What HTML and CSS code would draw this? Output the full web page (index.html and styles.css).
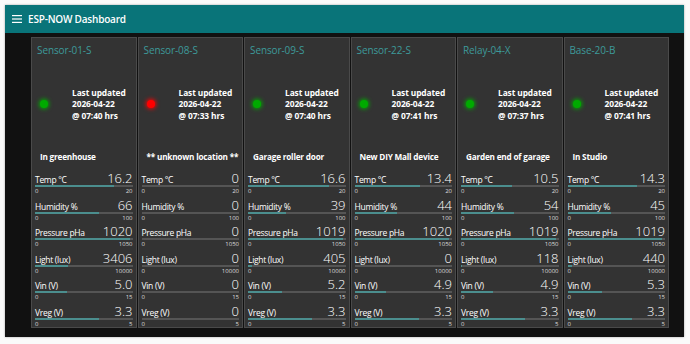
FILE: index.html
```html
<!DOCTYPE html>
<html lang="en">
<head>
    <meta charset="UTF-8">
    <title>ESP-NOW Dashboard</title>
    <link rel="stylesheet" href="styles.css">
</head>
<body>
    <div class="frame">
        <div class="toolbar">
            <svg class="menu-icon" width="10" height="8" viewBox="0 0 10 8">
                <rect x="0" y="0" width="10" height="1.2" fill="#fff"/>
                <rect x="0" y="3.4" width="10" height="1.2" fill="#fff"/>
                <rect x="0" y="6.8" width="10" height="1.2" fill="#fff"/>
            </svg>
            <span class="title">ESP-NOW Dashboard</span>
        </div>

        <div class="content">
            <div class="cards" id="cards"></div>
        </div>
    </div>

    <script>
        const devices = [
            { name: 'Sensor-01-S', ok: true, time: '07:40', loc: 'In greenhouse', vals: ['16.2', '66', '1020', '3406', '5.0', '3.3'] },
            { name: 'Sensor-08-S', ok: false, time: '07:33', loc: '** unknown location **', vals: ['0', '0', '0', '0', '0', '0'] },
            { name: 'Sensor-09-S', ok: true, time: '07:40', loc: 'Garage roller door', vals: ['16.6', '39', '1019', '405', '5.2', '3.3'] },
            { name: 'Sensor-22-S', ok: true, time: '07:41', loc: 'New DIY Mall device', vals: ['13.4', '44', '1020', '0', '4.9', '3.3'] },
            { name: 'Relay-04-X', ok: true, time: '07:37', loc: 'Garden end of garage', vals: ['10.5', '54', '1019', '118', '4.9', '3.3'] },
            { name: 'Base-20-B', ok: true, time: '07:41', loc: 'In Studio', vals: ['14.3', '45', '1019', '440', '5.3', '3.3'] }
        ];

        const gauges = [
            { label: 'Temp °C', max: 20 },
            { label: 'Humidity %', max: 100 },
            { label: 'Pressure pHa', max: 1050 },
            { label: 'Light (lux)', max: 10000 },
            { label: 'Vin (V)', max: 15 },
            { label: 'Vreg (V)', max: 5 }
        ];

        const cards = document.getElementById('cards');

        devices.forEach(dev => {
            let html = '<div class="card-title">' + dev.name + '</div>';
            html += '<div class="status">';
            html += '<span class="dot ' + (dev.ok ? 'ok' : 'bad') + '"></span>';
            html += '<div class="updated"><div>Last updated</div><div>2026-04-22</div><div>@ ' + dev.time + ' hrs</div></div>';
            html += '</div>';
            html += '<div class="location">' + dev.loc + '</div>';

            gauges.forEach((g, i) => {
                const v = dev.vals[i];
                const pct = Math.min(100, parseFloat(v) / g.max * 100);
                html += '<div class="gauge">';
                html += '<div class="gauge-head"><span class="gauge-label">' + g.label + '</span><span class="gauge-value">' + v + '</span></div>';
                html += '<div class="track"><div class="fill" style="width:' + pct + '%"></div></div>';
                html += '<div class="range"><span>0</span><span>' + g.max + '</span></div>';
                html += '</div>';
            });

            const card = document.createElement('div');
            card.className = 'card';
            card.innerHTML = html;
            cards.appendChild(card);
        });
    </script>
</body>
</html>
```

FILE: styles.css
```css
* {
    margin: 0;
    padding: 0;
    box-sizing: border-box;
}

body {
    font-family: "Open Sans", "Noto Sans", sans-serif;
    background-color: #fafafa;
    padding: 5px;
}

.frame {
    width: 679px;
    height: 332px;
    background: #111;
    box-shadow: 0 0 2px rgba(0, 0, 0, 0.35);
    display: flex;
    flex-direction: column;
}

.toolbar {
    height: 28px;
    background-color: #097479;
    display: flex;
    align-items: center;
    padding-left: 7px;
    color: #fff;
}

.menu-icon {
    margin-right: 6px;
}

.title {
    font-size: 10px;
    font-weight: 600;
    letter-spacing: -0.2px;
}

.content {
    flex: 1;
    padding: 4px 15px 0 26px;
}

.cards {
    display: grid;
    grid-template-columns: repeat(6, 1fr);
    gap: 1px;
}

.card {
    height: 291px;
    background-color: #333;
    border: 1px solid #4a4a4a;
    color: #fff;
    padding: 0 3px;
}

.card-title {
    height: 24px;
    padding: 5px 0 0 2px;
    font-size: 10px;
    color: #3d9a9a;
    letter-spacing: -0.1px;
}

.status {
    height: 84px;
    display: flex;
    align-items: center;
    padding-left: 5px;
}

.dot {
    width: 8px;
    height: 8px;
    border-radius: 50%;
    margin-right: 24px;
    flex-shrink: 0;
}

.dot.ok {
    background-color: #0a0;
    box-shadow: 0 0 4px 1px #0a0;
}

.dot.bad {
    background-color: #f00;
    box-shadow: 0 0 4px 1px #f00;
}

.updated {
    font-size: 8.4px;
    font-weight: 700;
    line-height: 11.5px;
    letter-spacing: -0.1px;
}

.location {
    height: 22px;
    padding-left: 5px;
    font-size: 8.2px;
    font-weight: 700;
    line-height: 22px;
    letter-spacing: -0.2px;
    white-space: nowrap;
}

.gauge {
    height: 26.6px;
    padding-top: 4px;
}

.gauge-head {
    display: flex;
    justify-content: space-between;
    align-items: baseline;
    height: 13px;
    line-height: 13px;
}

.gauge-label {
    font-size: 8.5px;
    letter-spacing: -0.3px;
}

.gauge-value {
    font-size: 13px;
    font-weight: 300;
}

.track {
    height: 2px;
    background-color: #555;
}

.fill {
    height: 100%;
    background-color: #4b8e8e;
}

.range {
    display: flex;
    justify-content: space-between;
    font-size: 6px;
    line-height: 8px;
    color: #ddd;
}
```
